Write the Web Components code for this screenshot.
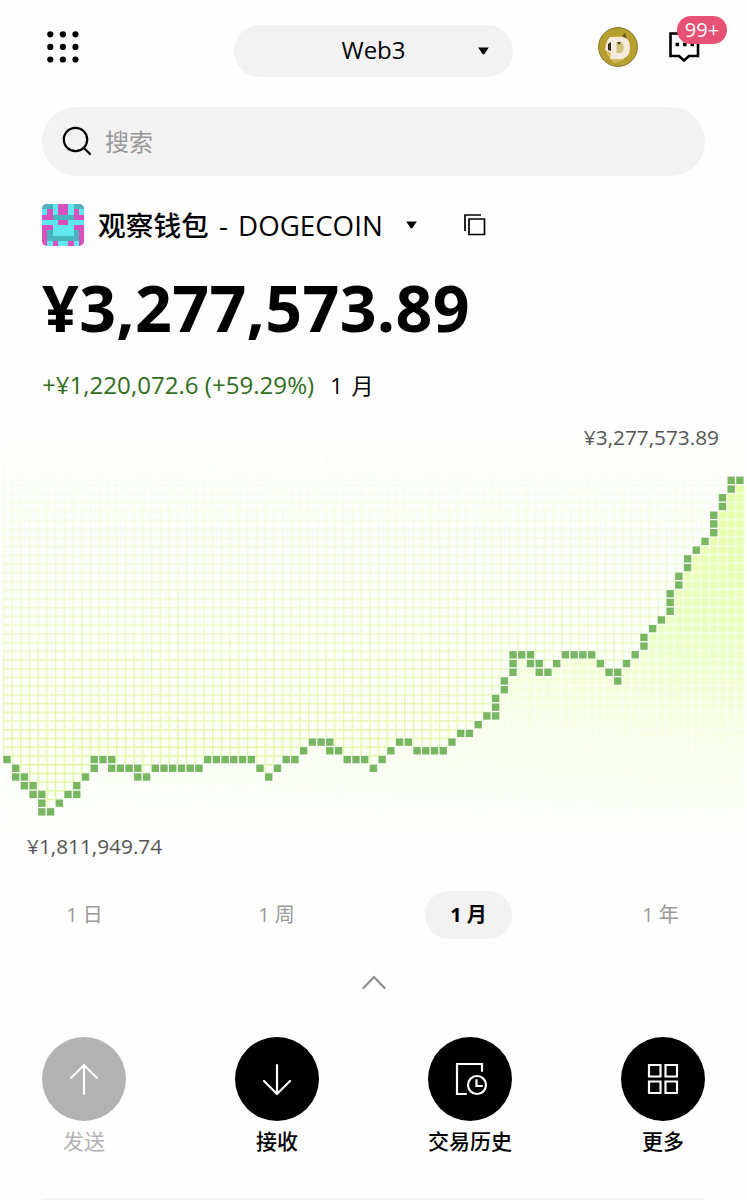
<!DOCTYPE html>
<html lang="zh-CN">
<head>
<meta charset="utf-8">
<meta name="viewport" content="width=device-width, initial-scale=1">
<title>Web3</title>
<style>
  body {
    margin: 0;
    background: #fefefe;
    color: #000;
    font-family: "Open Sans", "Noto Sans CJK SC", sans-serif;
  }
</style>
</head>
<body>
<wallet-app></wallet-app>

<script>
class BaseElement extends HTMLElement {
  constructor() {
    super();
    this.attachShadow({ mode: "open" });
  }

  connectedCallback() {
    this.shadowRoot.innerHTML = /* html */`
    <style>
      * { box-sizing: border-box; }
      svg { display: block; }
      ${this.constructor.styles}
    </style>
    ${this.render()}`;
  }
}

class WalletHeader extends BaseElement {
  static get styles() {
    return /* css */`
      :host {
        display: grid;
        grid-template-columns: 192px 279px 1fr;
        align-items: center;
        height: 82px;
        padding: 20px 0 0;
      }

      .dots {
        margin: -8px 0 0 5px;
      }

      .select {
        height: 52px;
        border-radius: 26px;
        background: #f2f2f2;
        display: grid;
        grid-template-columns: 1fr auto 1fr;
        align-items: center;
        font-size: 24px;
      }

      .select span {
        grid-column: 2;
        padding-bottom: 3px;
      }

      .select svg {
        justify-self: end;
        margin-right: 24px;
      }

      .right {
        display: flex;
        align-items: center;
        gap: 31px;
        margin: -8px 0 0 85px;
      }

      .messages {
        position: relative;
      }

      .badge {
        position: absolute;
        left: 8px;
        top: -16px;
        width: 50px;
        height: 28px;
        border-radius: 14px;
        background: #e75173;
        color: #fff;
        font-size: 20px;
        line-height: 27px;
        text-align: center;
      }
    `;
  }

  render() {
    const dots = [3.3, 15.9, 28.5]
      .flatMap((y) => [3.3, 15.9, 28.5].map((x) => `<circle cx="${x}" cy="${y}" r="3.1"/>`))
      .join("");

    return /* html */`
    <svg class="dots" width="32" height="32">${dots}</svg>
    <div class="select">
      <span>Web3</span>
      <svg width="11" height="8"><path d="M.2 .5h10.600L6.300 7.300h-1.600z"/></svg>
    </div>
    <div class="right">
      <svg width="40" height="40" viewBox="0 0 40 40">
        <circle cx="20" cy="20" r="19.4" fill="#b7a02f" stroke="#84732b"/>
        <path d="M12 10l-5 8 2 9 7 9 10-3 4-22-5-2z" fill="#d5bb63"/>
        <path d="M27 6l2 6-5-3z" fill="#65551c"/>
        <path d="M12 10h10c7 0 10 4 10 10.500S29 32 22 32H12l1-6-6-3 2-9z" fill="#f5eadb"/>
        <path d="M18.500 15h3.500c5 0 5 11 0 11h-3.500z" fill="#cfc47c"/>
        <path d="M10 17l3-2v9l-3-1z" fill="#302b1c"/>
        <path d="M19 15h4l-2 3z" fill="#433d27"/>
      </svg>
      <div class="messages">
        <svg width="31" height="31" viewBox="0 0 31 31" fill="none" stroke="#000" stroke-width="2.600">
          <path d="M1.500 1.500h27.500v22.500h-9l-5 4.500-5-4.500H1.500z"/>
          <path d="M6.500 12.500h3.500m4 0h3.500m4 0h3.500" stroke-width="3.500"/>
        </svg>
        <span class="badge">99+</span>
      </div>
    </div>`;
  }
}

class SearchBar extends BaseElement {
  static get styles() {
    return /* css */`
      :host {
        display: flex;
        align-items: center;
        gap: 13px;
        height: 69px;
        margin-top: 25px;
        padding: 0 0 2px 20px;
        border-radius: 35px;
        background: #f2f2f2;
        color: #999;
        font-size: 24px;
      }
    `;
  }

  render() {
    return /* html */`
    <svg width="30" height="30" fill="none" stroke="#000" stroke-width="2.200" stroke-linecap="round">
      <circle cx="13.500" cy="13.500" r="11.700"/>
      <path d="M22 22l6 6"/>
    </svg>
    <slot></slot>`;
  }
}

class WalletAvatar extends BaseElement {
  static get styles() {
    return /* css */`
      :host {
        display: grid;
        grid-template: repeat(8, 1fr) / repeat(8, 1fr);
        flex: none;
        width: 42px;
        height: 42px;
        border-radius: 5px;
        overflow: hidden;
        background: #d94fbd;
      }

      .t {
        background: #4bb5bd;
      }

      .c {
        background: #5fe8ee;
      }
    `;
  }

  render() {
    // left half only, the right half is mirrored
    const half = ["ttcm", "cmcm", "mmtt", "cccm", "mmcc", "mtcc", "mttt", "mcmc"];
    return half
      .flatMap((row) => [...row, ...[...row].reverse()])
      .map((color) => `<i class="${color}"></i>`)
      .join("");
  }
}

class WalletBalance extends BaseElement {
  static get styles() {
    return /* css */`
      :host {
        display: block;
      }

      .account {
        display: flex;
        align-items: center;
        height: 42px;
        margin-top: 28px;
        font-size: 27.700px;
        font-weight: 500;
        white-space: pre;
      }

      .name {
        margin: 0 23px 2px 14px;
        word-spacing: 3px;
      }

      .copy {
        margin-left: 47px;
      }

      .total {
        height: 80px;
        margin-top: 21px;
        font-size: 64.500px;
        font-weight: 700;
        line-height: 80px;
        letter-spacing: .3px;
      }

      .change {
        display: flex;
        gap: 16px;
        height: 36px;
        margin-top: 20px;
        font-size: 24.100px;
        line-height: 36px;
      }

      .gain {
        color: #306d1d;
      }

      .period {
        font-size: 22px;
        word-spacing: 3px;
      }
    `;
  }

  render() {
    return /* html */`
    <div class="account">
      <wallet-avatar></wallet-avatar><span class="name">观察钱包 - DOGECOIN</span><svg width="11" height="8"><path d="M.2 .5h10.600L6.300 7.300h-1.600z"/></svg><svg class="copy" width="22" height="22" fill="none" stroke="#000" stroke-width="1.700"><path d="M1 17V1h16"/><path d="M5 5h15.500v15.500H5z"/></svg>
    </div>
    <div class="total">¥3,277,573.89</div>
    <div class="change">
      <span class="gain">+¥1,220,072.6 (+59.29%)</span>
      <span class="period">1 月</span>
    </div>`;
  }
}

class PixelChart extends BaseElement {
  static get styles() {
    return /* css */`
      :host {
        display: grid;
        grid-template-rows: 1fr auto;
        height: 450px;
        margin-top: 17px;
        color: #555;
        font-size: 20.800px;
        line-height: 30px;
      }

      svg {
        grid-area: 1 / 1 / 3 / 2;
      }

      .high {
        grid-area: 1 / 1;
        justify-self: end;
        padding: 2px 28px 0 0;
      }

      .low {
        grid-area: 2 / 1;
        padding: 0 0 9px 27px;
      }
    `;
  }

  render() {
    const pitch = 8.726;
    const left = 2.64;
    const top = 56;
    // rows covered by the line in each column, top to bottom
    const line = `32 33-34 34-35 35-36 36-38 38 37 36 35-36 34 32-33 32 32-33 33 33 33-34 34
      33 33 33 33 33 33 32 32 32 32 32 32 33 34 33 32 32 31 30 30 30-31 31 32 32 32 33
      32 31 30 30 31 31 31 31 30 29 29 28 27 25-27 23-24 20-22 20 20-21 21-22 22 21
      20 20 20 20 21 22 22-23 21 20 18-19 17 16 13-15 11-12 9-10 8 7 4-6 2-3 0-1 0`
      .split(/\s+/)
      .map((range) => range.split("-").map(Number));

    let above = "";
    let below = "";
    let cells = "";
    line.forEach(([first, last = first], col) => {
      const x = left + col * pitch;
      above += `M${x} 0h${pitch}V${top + first * pitch}h${-pitch}z`;
      below += `M${x} ${top + (last + 1) * pitch}h${pitch}V450h${-pitch}z`;
      for (let row = first; row <= last; row++) {
        cells += `<rect x="${x + .6}" y="${top + row * pitch + .6}" width="7.400" height="7.400"/>`;
      }
    });

    return /* html */`
    <svg width="747" height="450">
      <defs>
        <pattern id="lines" x="${left}" y="${top}" width="${pitch}" height="${pitch}" patternUnits="userSpaceOnUse">
          <path d="M0 .5h9M.5 0v9" stroke="#dcf89b" stroke-width="1.700"/>
        </pattern>
        <pattern id="tiles" x="${left}" y="${top}" width="${pitch}" height="${pitch}" patternUnits="userSpaceOnUse">
          <rect x=".6" y=".6" width="7.400" height="7.400" fill="#e3ffa5"/>
        </pattern>
        <linearGradient id="down" x2="0" y2="1">
          <stop offset=".03" stop-color="#fff" stop-opacity="0"/>
          <stop offset=".3" stop-color="#fff" stop-opacity=".35"/>
          <stop offset=".8" stop-color="#fff"/>
        </linearGradient>
        <linearGradient id="up" x2="0" y2="1">
          <stop offset=".2" stop-color="#fff" stop-opacity=".95"/>
          <stop offset=".45" stop-color="#fff" stop-opacity=".75"/>
          <stop offset=".7" stop-color="#fff" stop-opacity=".3"/>
          <stop offset=".93" stop-color="#fff" stop-opacity="0"/>
        </linearGradient>
        <linearGradient id="across">
          <stop offset="0" stop-color="#fff" stop-opacity=".45"/>
          <stop offset=".65" stop-color="#fff" stop-opacity=".7"/>
          <stop offset="1" stop-color="#fff"/>
        </linearGradient>
        <mask id="fade-top" maskUnits="userSpaceOnUse" x="0" y="0" width="747" height="450">
          <rect width="747" height="450" fill="url(#down)"/>
        </mask>
        <mask id="fade-bottom" maskUnits="userSpaceOnUse" x="0" y="0" width="747" height="450">
          <rect width="747" height="450" fill="url(#up)"/>
        </mask>
        <mask id="fade-left" maskUnits="userSpaceOnUse" x="0" y="0" width="747" height="450">
          <rect width="747" height="450" fill="url(#across)"/>
        </mask>
      </defs>
      <g mask="url(#fade-top)">
        <path d="${above}" fill="#f8ffe8" opacity=".4"/>
        <path d="${above}" fill="url(#lines)"/>
      </g>
      <g mask="url(#fade-left)">
        <g mask="url(#fade-bottom)">
          <path d="${below}" fill="#f4ffda" opacity=".8"/>
          <path d="${below}" fill="url(#tiles)"/>
        </g>
      </g>
      <g fill="#79b661">${cells}</g>
    </svg>
    <span class="high">¥3,277,573.89</span>
    <span class="low">¥1,811,949.74</span>`;
  }
}

class PeriodTab extends BaseElement {
  static get styles() {
    return /* css */`
      :host {
        display: block;
        width: 87px;
        height: 48px;
        border-radius: 24px;
        color: #999;
        font-size: 20px;
        line-height: 48px;
        text-align: center;
      }

      :host([active]) {
        background: #f2f2f2;
        color: #000;
        font-weight: 700;
      }
    `;
  }

  render() {
    return `<slot></slot>`;
  }
}

class ActionButton extends BaseElement {
  static get styles() {
    return /* css */`
      :host {
        display: flex;
        flex-direction: column;
        align-items: center;
        width: 84px;
        font-size: 21px;
        font-weight: 500;
        line-height: 30px;
        white-space: nowrap;
      }

      :host([disabled]) {
        color: #b2b2b2;
        font-weight: 400;
      }

      .circle {
        width: 84px;
        height: 84px;
        margin-bottom: 5px;
        border-radius: 50%;
        background: #000;
      }

      :host([disabled]) .circle {
        background: #b2b2b2;
      }
    `;
  }

  static get icons() {
    return {
      send: `<path d="M42 57V28M29 41l13-13 13 13"/>`,
      receive: `<path d="M42 28v29M29 44l13 13 13-13"/>`,
      history: `<path d="M38 57h-9V27h25v7"/><circle cx="49" cy="48" r="9"/><path d="M48.500 43v6h5.500"/>`,
      more: `<path d="M28 28h11.500v11.500H28zM44.500 28H56v11.500H44.500zM28 44.500h11.500V56H28zM44.500 44.500H56V56H44.500z"/>`,
    };
  }

  render() {
    return /* html */`
    <svg class="circle" viewBox="0 0 84 84" fill="none" stroke="#fff" stroke-width="2.200" stroke-linecap="round">
      ${ActionButton.icons[this.getAttribute("icon")]}
    </svg>
    <slot></slot>`;
  }
}

class WalletApp extends BaseElement {
  static get styles() {
    return /* css */`
      :host {
        display: block;
        width: 747px;
        height: 1200px;
        overflow: hidden;
      }

      .top {
        padding: 0 42px;
      }

      .tabs {
        display: flex;
        justify-content: space-between;
        margin-top: 21px;
        padding: 0 43px 0 41px;
      }

      .collapse {
        margin: 36px auto 0;
      }

      .actions {
        display: flex;
        justify-content: space-between;
        margin-top: 47px;
        padding: 0 42px;
      }

      hr {
        height: 3px;
        margin: 42px 42px 0;
        border: 0;
        background: #f5f5f5;
      }
    `;
  }

  render() {
    return /* html */`
    <div class="top">
      <wallet-header></wallet-header>
      <search-bar>搜索</search-bar>
      <wallet-balance></wallet-balance>
    </div>
    <pixel-chart></pixel-chart>
    <div class="tabs">
      <period-tab>1 日</period-tab>
      <period-tab>1 周</period-tab>
      <period-tab active>1 月</period-tab>
      <period-tab>1 年</period-tab>
    </div>
    <svg class="collapse" width="24" height="15" fill="none" stroke="#8c8c8c" stroke-width="2.200" stroke-linecap="round">
      <path d="M1.500 13L12 2l10.500 11"/>
    </svg>
    <div class="actions">
      <action-button icon="send" disabled>发送</action-button>
      <action-button icon="receive">接收</action-button>
      <action-button icon="history">交易历史</action-button>
      <action-button icon="more">更多</action-button>
    </div>
    <hr>`;
  }
}

customElements.define("wallet-header", WalletHeader);
customElements.define("search-bar", SearchBar);
customElements.define("wallet-avatar", WalletAvatar);
customElements.define("wallet-balance", WalletBalance);
customElements.define("pixel-chart", PixelChart);
customElements.define("period-tab", PeriodTab);
customElements.define("action-button", ActionButton);
customElements.define("wallet-app", WalletApp);
</script>
</body>
</html>
